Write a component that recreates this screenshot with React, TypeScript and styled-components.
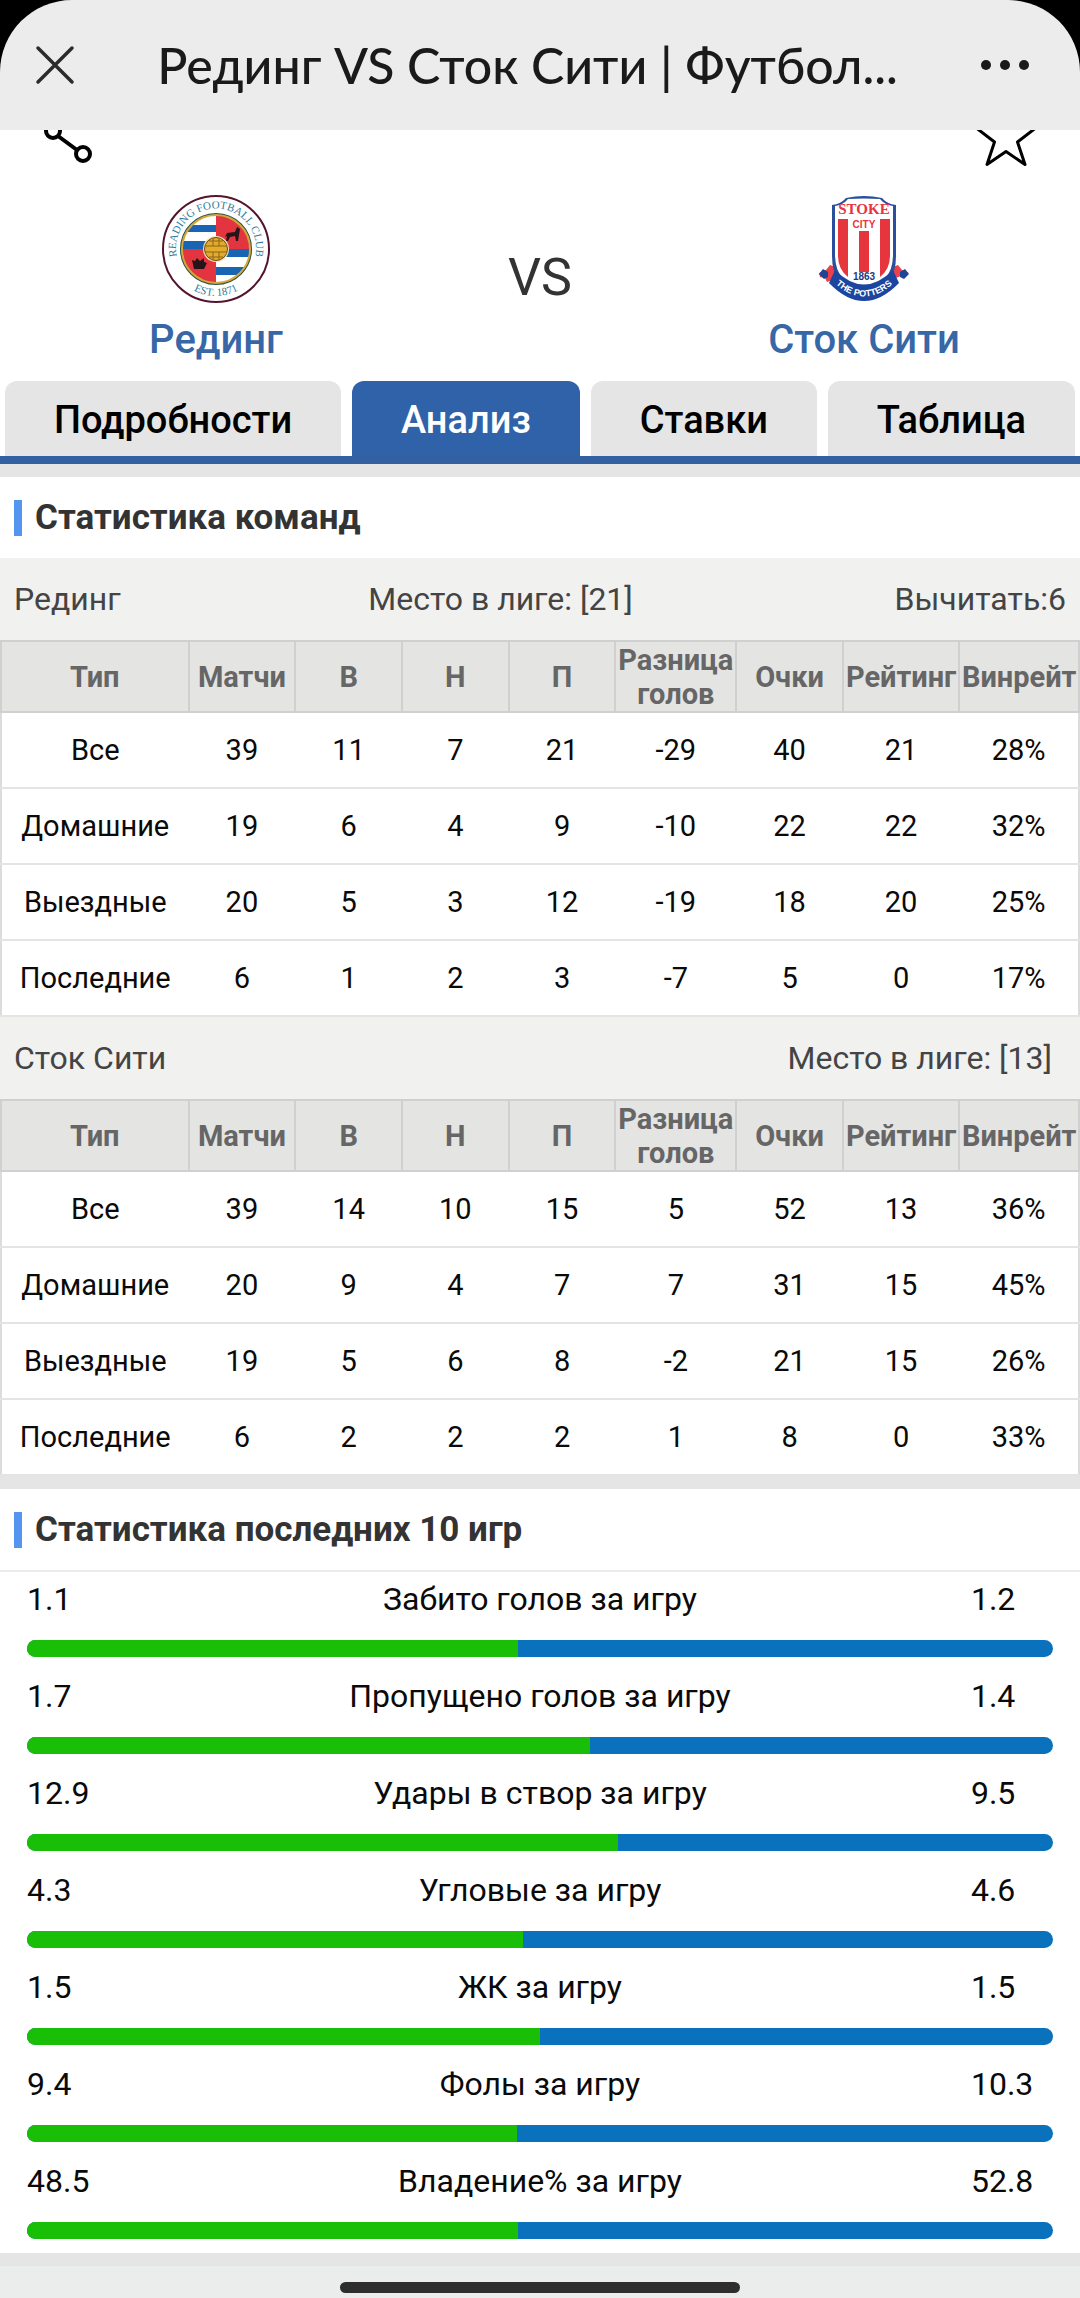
import React from 'react';
import styled, { createGlobalStyle } from 'styled-components';

const GlobalStyle = createGlobalStyle`
  * { box-sizing: border-box; }
  body {
    margin: 0;
    background: #fff;
    color: #0a0a0a;
    font-family: Roboto, "Noto Sans", sans-serif;
  }
  button { font: inherit; color: inherit; border: 0; background: none; padding: 0; cursor: pointer; }
  h1, h2 { margin: 0; font-weight: inherit; }
`;

const Page = styled.div`
  display: flex;
  flex-direction: column;
  width: 100%;
`;

const HeaderBackdrop = styled.div`
  background: linear-gradient(#000 0 80px, #ececec 80px);
`;

const Header = styled.header`
  display: flex;
  align-items: center;
  justify-content: space-between;
  height: 130px;
  padding: 0 50px 0 35px;
  border-radius: 72px 72px 0 0;
  background: #ececec;
  color: #1a1a1a;
`;

const Title = styled.h1`
  font-family: Lato, "Noto Sans", sans-serif;
  font-size: 50px;
  line-height: 60px;
  font-weight: 500;
  white-space: nowrap;
`;

const IconButton = styled.button`
  display: flex;
  flex: none;
`;

const ActionRow = styled.div`
  display: flex;
  justify-content: space-between;
  align-items: flex-end;
  height: 45px;
  padding: 0 38px;
  overflow: hidden;
`;

const Teams = styled.section`
  display: grid;
  grid-template-columns: 2fr 1fr 2fr;
  align-items: center;
  padding: 19px 0;
`;

const Team = styled.div`
  display: flex;
  flex-direction: column;
  align-items: center;
  gap: 14px;
`;

const TeamName = styled.span`
  color: #3767a6;
  font-size: 40px;
  line-height: 44px;
  font-weight: 500;
`;

const Versus = styled.span`
  color: #333;
  font-size: 52px;
  line-height: 60px;
  text-align: center;
`;

const Tabs = styled.nav`
  display: flex;
  gap: 11px;
  padding: 0 5px;
  border-bottom: 8px solid #3360a1;
`;

const Tab = styled.button<{ $active?: boolean }>`
  flex: 1 1 auto;
  height: 75px;
  padding-top: 2px;
  border-radius: 12px 12px 0 0;
  background: ${(p) => (p.$active ? '#3062a9' : '#e5e5e5')};
  color: ${(p) => (p.$active ? '#fff' : '#000')};
  font-size: 38px;
  font-weight: 500;
`;

const Divider = styled.div`
  height: 13px;
  background: #e5e5e5;
`;

const SectionTitle = styled.h2`
  display: flex;
  align-items: center;
  gap: 13px;
  height: 81px;
  padding: 0 14px;
  color: #333;
  font-size: 35px;
  font-weight: 700;

  &::before {
    content: '';
    width: 8px;
    height: 36px;
    background: #5495ef;
  }
`;

const TeamInfo = styled.div`
  display: flex;
  justify-content: space-between;
  align-items: center;
  height: 82px;
  padding: 0 14px;
  background: #f1f1f0;
  color: #444;
  font-size: 32px;
`;

const Place = styled.span`
  margin-right: 14px;
`;

const Table = styled.table`
  width: 100%;
  table-layout: fixed;
  border-collapse: collapse;
  border: 2px solid #dcdcdc;
  text-align: center;
`;

const Col = styled.col<{ $share: number }>`
  width: ${(p) => p.$share}%;
`;

const HeadCell = styled.th`
  height: 71px;
  padding: 0;
  border: 2px solid #d0d0d0;
  background: #e4e4e3;
  color: #666;
  font-size: 29px;
  line-height: 34px;
  font-weight: 700;
`;

const Cell = styled.td`
  height: 76px;
  padding: 0;
  border-bottom: 2px solid #e4e4e4;
  font-size: 29px;
  line-height: 34px;
`;

const Averages = styled.section`
  padding: 0 27px 2px;
  border-top: 2px solid #ebebeb;
`;

const Metric = styled.div`
  display: flex;
  flex-direction: column;
  gap: 21px;
  height: 97px;
  padding-top: 7px;
`;

const MetricText = styled.div`
  display: grid;
  grid-template-columns: 8% 1fr 8%;
  font-size: 32px;
  line-height: 40px;
`;

const MetricLabel = styled.span`
  text-align: center;
`;

const Bar = styled.div`
  height: 17px;
  border-radius: 9px;
  background: #0a72bc;
  overflow: hidden;
`;

const BarFill = styled.div`
  height: 100%;
  background: #19be06;
`;

const Footer = styled.footer`
  display: flex;
  justify-content: center;
  align-items: center;
  height: 32px;
  padding-top: 10px;
  background: #ebecec;
`;

const HomeIndicator = styled.div`
  width: 37%;
  height: 11px;
  border-radius: 6px;
  background: #2e2e2e;
`;

const ReadingCrest = () => (
  <svg width="110" height="110" viewBox="0 0 110 110" role="img" aria-label="Рединг">
    <defs>
      <clipPath id="reading-disc"><circle cx="55" cy="55" r="34" /></clipPath>
      <path id="reading-top" d="M17 67A40 40 0 1 1 93 67" />
      <path id="reading-bottom" d="M13 76A47 47 0 0 0 97 76" />
    </defs>
    <circle cx="55" cy="55" r="53" fill="#fff" stroke="#54142f" strokeWidth="2" />
    <g clipPath="url(#reading-disc)">
      <rect x="20" y="20" width="70" height="70" fill="#fff" />
      <rect x="55" y="20" width="35" height="36" fill="#e3353f" />
      <rect x="20" y="55" width="35" height="35" fill="#e3353f" />
      <path fill="#1765b3" d="M20 31h35v7H20zM20 47h35v8H20zM55 55h35v8H55zM55 73h35v8H55z" />
    </g>
    <circle cx="55" cy="55" r="35" fill="none" stroke="#2a5442" strokeWidth="2" />
    <circle cx="55" cy="55" r="34" fill="none" stroke="#d6a63c" strokeWidth="2" />
    <path fill="#25141a" d="M64 43l2-4 8-1 2-5 3 2-1 6-1 6h-2l-1-5-5 1-2 4h-2l1-5zM31 66l3 1 2-3 3 3 4-3v4l3 1-3 6H33z" />
    <circle cx="55" cy="55" r="13" fill="#f3e3b6" />
    <circle cx="55" cy="55" r="11.500" fill="#e2ab2b" stroke="#6b4d18" strokeWidth="1" />
    <path d="M44 52h22M44 58h22M48 47h14M48 63h14M52 44v8M58 44v8M52 58v8M58 58v8" stroke="#8a651c" strokeWidth="1" />
    <g fill="#337c9e" fontFamily="Liberation Serif, serif" fontSize="11">
      <text textAnchor="middle"><textPath href="#reading-top" startOffset="50%">READING FOOTBALL CLUB</textPath></text>
      <text textAnchor="middle"><textPath href="#reading-bottom" startOffset="50%">EST. 1871</textPath></text>
    </g>
  </svg>
);

const StokeCrest = () => (
  <svg width="110" height="110" viewBox="0 0 110 110" role="img" aria-label="Сток Сити">
    <defs>
      <path id="stoke-ribbon" d="M22 86Q55 119 88 86" />
    </defs>
    <path d="M10 79l7-3 4-5 8 3-3 11-8 3-2-4-5-1zM100 79l-7-3-4-5-8 3 3 11 8-3 2-2 5-1z" fill="#e9424b" />
    <path d="M10 80l4-5 5 3v5l-4 2zM100 80l-4-5-5 3v5l4 2z" fill="#1d4796" />
    <path d="M23 11Q32 10 37 4Q55 0 73 4Q78 10 87 11V62Q87 78 80 87Q70 100 55 103Q40 100 30 87Q23 78 23 62Z" fill="#2b4f9c" />
    <path d="M26 12Q34 11 39 5Q55 4 71 5Q76 11 84 12V62Q83 91 55 92Q27 91 26 62Z" fill="#fff" />
    <path fill="#e7353d" d="M29 25H39V83Q29 75 29 62ZM50 37h10v41H50zM71 25H81V62Q81 75 71 83Z" />
    <path d="M26 76Q55 105 84 76L90 89Q55 125 20 89Z" fill="#1c45a0" />
    <g textAnchor="middle" fontFamily="Liberation Sans, sans-serif" fontWeight="700">
      <text x="55" y="20" fill="#e7353d" fontFamily="Liberation Serif, serif" fontSize="15">STOKE</text>
      <text x="55" y="34" fill="#e7353d" fontSize="10">CITY</text>
      <text x="55" y="86" fill="#1c3a80" fontSize="10">1863</text>
      <text fill="#fff" fontSize="9"><textPath href="#stoke-ribbon" startOffset="50%">THE POTTERS</textPath></text>
    </g>
  </svg>
);

const columns = [
  { label: 'Тип', share: 17.4 },
  { label: 'Матчи', share: 9.9 },
  { label: 'В', share: 9.9 },
  { label: 'Н', share: 9.9 },
  { label: 'П', share: 9.9 },
  { label: 'Разница голов', share: 11.2 },
  { label: 'Очки', share: 9.9 },
  { label: 'Рейтинг', share: 10.8 },
  { label: 'Винрейт', share: 11.1 },
];

const readingRows = [
  ['Все', '39', '11', '7', '21', '-29', '40', '21', '28%'],
  ['Домашние', '19', '6', '4', '9', '-10', '22', '22', '32%'],
  ['Выездные', '20', '5', '3', '12', '-19', '18', '20', '25%'],
  ['Последние', '6', '1', '2', '3', '-7', '5', '0', '17%'],
];

const stokeRows = [
  ['Все', '39', '14', '10', '15', '5', '52', '13', '36%'],
  ['Домашние', '20', '9', '4', '7', '7', '31', '15', '45%'],
  ['Выездные', '19', '5', '6', '8', '-2', '21', '15', '26%'],
  ['Последние', '6', '2', '2', '2', '1', '8', '0', '33%'],
];

const metrics: [string, number, number][] = [
  ['Забито голов за игру', 1.1, 1.2],
  ['Пропущено голов за игру', 1.7, 1.4],
  ['Удары в створ за игру', 12.9, 9.5],
  ['Угловые за игру', 4.3, 4.6],
  ['ЖК за игру', 1.5, 1.5],
  ['Фолы за игру', 9.4, 10.3],
  ['Владение% за игру', 48.5, 52.8],
];

const StatsTable = ({ rows }: { rows: string[][] }) => (
  <Table>
    <colgroup>
      {columns.map((c) => <Col key={c.label} $share={c.share} />)}
    </colgroup>
    <thead>
      <tr>{columns.map((c) => <HeadCell key={c.label} scope="col">{c.label}</HeadCell>)}</tr>
    </thead>
    <tbody>
      {rows.map((row) => (
        <tr key={row[0]}>{row.map((value, i) => <Cell key={i}>{value}</Cell>)}</tr>
      ))}
    </tbody>
  </Table>
);

export default function App() {
  return (
    <Page>
      <GlobalStyle />
      <HeaderBackdrop>
        <Header>
          <IconButton aria-label="Закрыть">
            <svg width="40" height="40" viewBox="0 0 40 40" stroke="#2b2b2b" strokeWidth="3.500" strokeLinecap="round">
              <path d="M3 3L37 37M37 3L3 37" />
            </svg>
          </IconButton>
          <Title>Рединг VS Сток Сити | Футбол...</Title>
          <IconButton aria-label="Ещё">
            <svg width="50" height="12" viewBox="0 0 50 12" fill="#1a1a1a">
              <circle cx="6" cy="6" r="5" /><circle cx="25" cy="6" r="5" /><circle cx="44" cy="6" r="5" />
            </svg>
          </IconButton>
        </Header>
      </HeaderBackdrop>

      <ActionRow>
        <IconButton aria-label="Поделиться">
          <svg width="72" height="72" viewBox="0 0 72 72" fill="none" stroke="#000" strokeWidth="4">
            <circle cx="15" cy="28" r="7" /><circle cx="45" cy="51" r="7" /><circle cx="45" cy="7" r="6" />
            <path d="M20 33L39 47M21 25L39 11" />
          </svg>
        </IconButton>
        <IconButton aria-label="В избранное">
          <svg width="72" height="72" viewBox="0 0 72 72" fill="none" stroke="#000" strokeWidth="3" strokeLinejoin="round">
            <path d="M36 3L43.600 25L65 25.500L47.500 39L55 61.500L36 48.500L17 61.500L24.500 39L7 25.500L28.400 25Z" />
          </svg>
        </IconButton>
      </ActionRow>

      <Teams>
        <Team><ReadingCrest /><TeamName>Рединг</TeamName></Team>
        <Versus>VS</Versus>
        <Team><StokeCrest /><TeamName>Сток Сити</TeamName></Team>
      </Teams>

      <Tabs>
        <Tab>Подробности</Tab>
        <Tab $active aria-current="page">Анализ</Tab>
        <Tab>Ставки</Tab>
        <Tab>Таблица</Tab>
      </Tabs>
      <Divider />

      <SectionTitle>Статистика команд</SectionTitle>
      <TeamInfo>
        <span>Рединг</span>
        <Place>Место в лиге: [21]</Place>
        <span>Вычитать:6</span>
      </TeamInfo>
      <StatsTable rows={readingRows} />
      <TeamInfo>
        <span>Сток Сити</span>
        <Place>Место в лиге: [13]</Place>
      </TeamInfo>
      <StatsTable rows={stokeRows} />
      <Divider />

      <SectionTitle>Статистика последних 10 игр</SectionTitle>
      <Averages>
        {metrics.map(([label, home, away]) => (
          <Metric key={label}>
            <MetricText>
              <span>{home}</span>
              <MetricLabel>{label}</MetricLabel>
              <span>{away}</span>
            </MetricText>
            <Bar><BarFill style={{ width: `${(home / (home + away)) * 100}%` }} /></Bar>
          </Metric>
        ))}
      </Averages>
      <Divider />
      <Footer><HomeIndicator /></Footer>
    </Page>
  );
}
